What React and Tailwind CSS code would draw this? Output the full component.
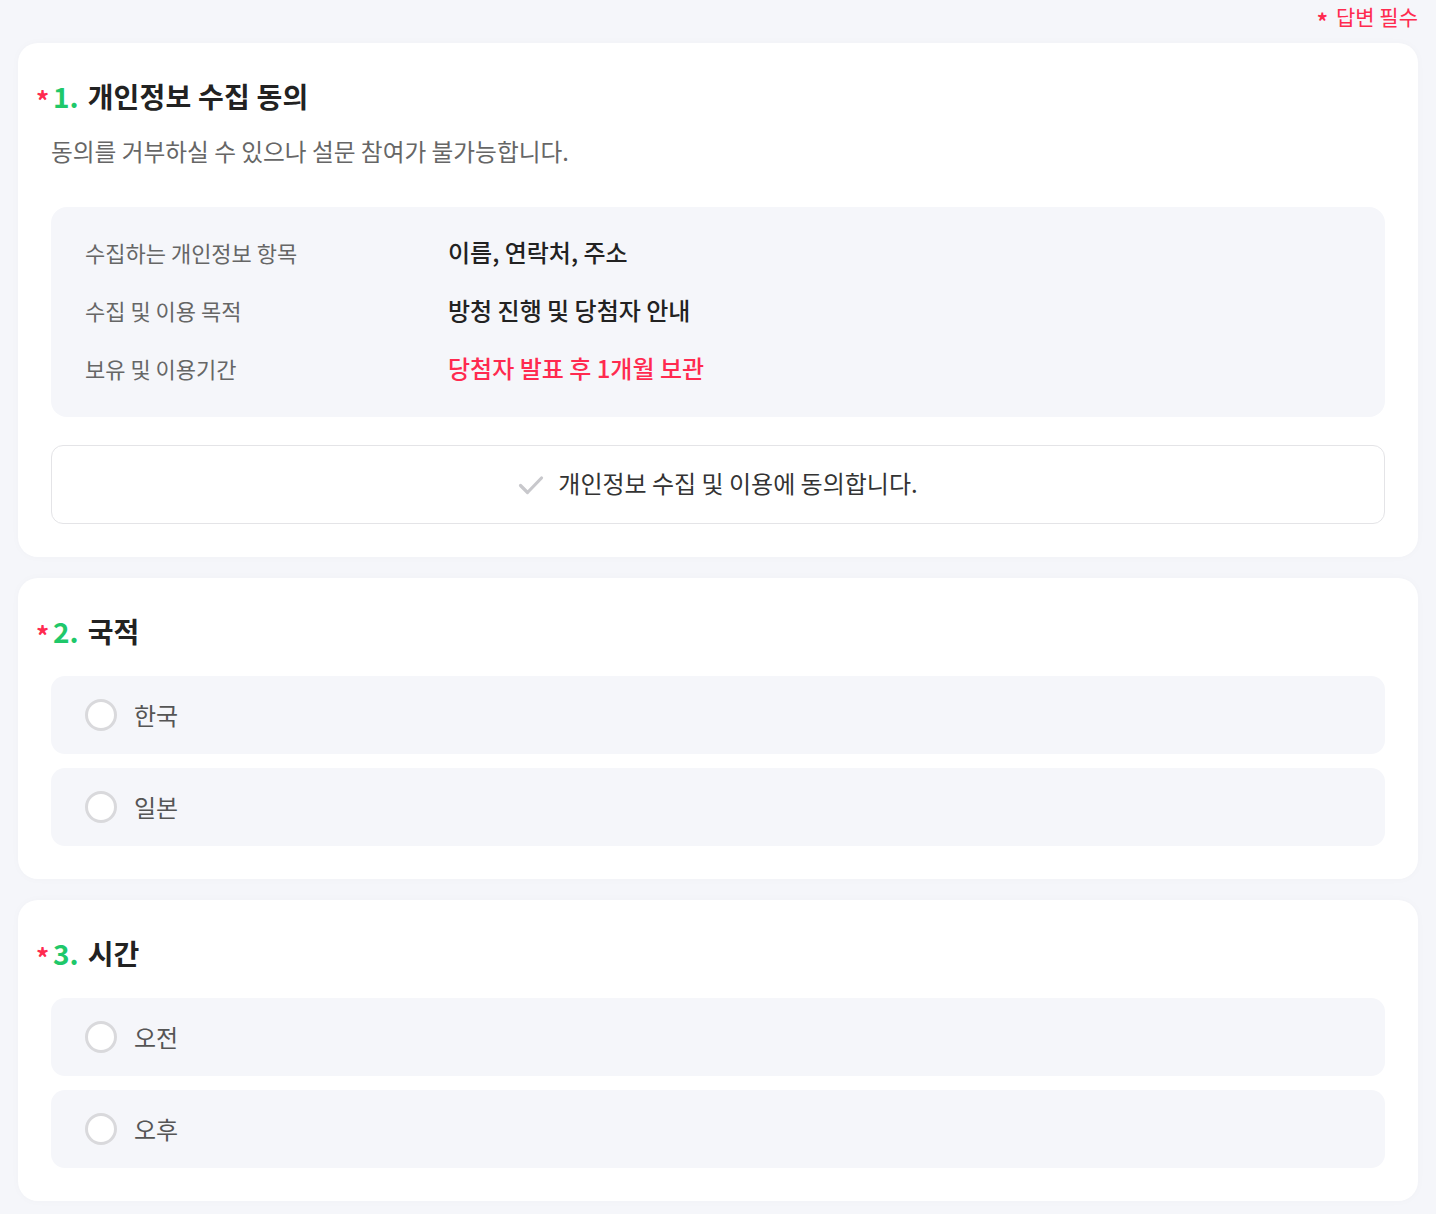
import React from "react";

const RED = "text-[#ff2a4f]";

const Title = ({ num, children }) => (
  <h2 className="ml-[-15px] flex h-[40px] items-center text-[28px] font-bold leading-[38px] text-[#222]">
    <span className={`relative top-[4px] mr-[6px] w-[11px] text-[26px] font-bold leading-[26px] ${RED}`}>*</span>
    <span className="mr-[9px] text-[#1fc86a]">{num}.</span>
    <span className="tracking-[0.2px]">{children}</span>
  </h2>
);

const Radio = ({ label }) => (
  <div className="flex h-[78px] items-center rounded-[14px] bg-[#f5f6fa] px-[34px]">
    <span className="h-[32px] w-[32px] rounded-full border-[3px] border-[#d9d9dc] bg-white" />
    <span className="ml-[17px] text-[24px] leading-[28px] text-[#555]">{label}</span>
  </div>
);

const Card = ({ children }) => (
  <section className="rounded-[20px] bg-white px-[33px] pt-[33px] pb-[33px] shadow-[0_0_10px_rgba(0,0,0,0.025)]">
    {children}
  </section>
);

const infoRows = [
  { label: "수집하는 개인정보 항목", value: "이름, 연락처, 주소" },
  { label: "수집 및 이용 목적", value: "방청 진행 및 당첨자 안내" },
  { label: "보유 및 이용기간", value: "당첨자 발표 후 1개월 보관", red: true },
];

export default function App() {
  return (
    <div className="min-h-[1214px] bg-[#f5f6fa] px-[18px] pb-[12px] font-['Noto_Sans_CJK_KR','Noto_Sans',sans-serif]">
      {/* required note */}
      <div className={`flex h-[43px] items-start justify-end pt-[2px] text-[21px] leading-[28px] ${RED}`}>
        <span className="relative top-[4px] mr-[8px] text-[22px] font-bold">*</span>
        <span>답변 필수</span>
      </div>

      <div className="flex flex-col gap-[21px]">
        {/* 1 */}
        <Card>
          <Title num="1">개인정보 수집 동의</Title>
          <p className="mt-[20px] text-[23.7px] leading-[30px] text-[#666]">
            동의를 거부하실 수 있으나 설문 참여가 불가능합니다.
          </p>

          <div className="mt-[41px] flex flex-col gap-[28px] rounded-[16px] bg-[#f5f6fa] px-[34px] pt-[30px] pb-[34px]">
            {infoRows.map((r) => (
              <div key={r.label} className="flex h-[30px] items-center">
                <span className="w-[363px] text-[22px] leading-[30px] text-[#666]">
                  {r.label}
                </span>
                <span
                  className={`text-[24px] font-medium leading-[30px] ${
                    r.red ? RED : "text-[#222]"
                  }`}
                >
                  {r.value}
                </span>
              </div>
            ))}
          </div>

          <button className="mt-[28px] flex h-[79px] w-full items-center justify-center rounded-[12px] border border-[#e4e4e7] bg-white">
            <svg width="26" height="20" viewBox="0 0 26 20" fill="none" className="mr-[14px]">
              <path d="M2.5 10.5l7 7L23.5 3" stroke="#c8c8cc" strokeWidth="3.2" strokeLinecap="round" strokeLinejoin="round" />
            </svg>
            <span className="relative top-[-2px] text-[24px] leading-[30px] text-[#333]">
              개인정보 수집 및 이용에 동의합니다.
            </span>
          </button>
        </Card>

        {/* 2 */}
        <Card>
          <Title num="2">국적</Title>
          <div className="mt-[25px] flex flex-col gap-[14px]">
            <Radio label="한국" />
            <Radio label="일본" />
          </div>
        </Card>

        {/* 3 */}
        <Card>
          <Title num="3">시간</Title>
          <div className="mt-[25px] flex flex-col gap-[14px]">
            <Radio label="오전" />
            <Radio label="오후" />
          </div>
        </Card>
      </div>
    </div>
  );
}
